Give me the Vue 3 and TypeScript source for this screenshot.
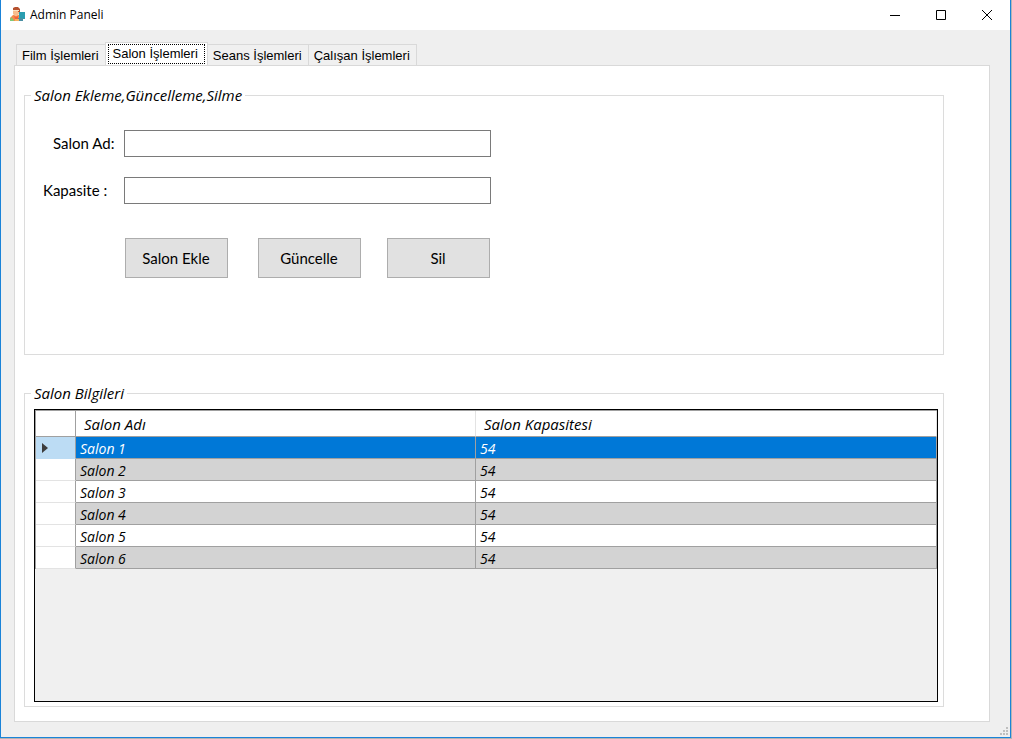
<script setup lang="ts">
import { ref } from 'vue'

interface Hall {
  name: string
  capacity: number
}

const tabs: string[] = ['Film İşlemleri', 'Salon İşlemleri', 'Seans İşlemleri', 'Çalışan İşlemleri']
const activeTab = ref(1)

const halls = ref<Hall[]>([1, 2, 3, 4, 5, 6].map((n) => ({ name: `Salon ${n}`, capacity: 54 })))
const selected = ref(0)
const hallName = ref('')
const capacity = ref('')
</script>

<template>
  <div class="window">
    <header class="titlebar">
      <svg class="app-icon" viewBox="0 0 16 16" aria-hidden="true">
        <path d="M1 14v-3l3-3h6v6z" fill="#f58a4b" />
        <path d="M1 13l1-3 2 2 1 2H1z" fill="#7fc97a" />
        <path d="M4 3h6v4L8 9H6L4 7z" fill="#f8bd8d" />
        <path d="M4 3V1l2-1h3l2 2v3H9V3z" fill="#b5512f" />
        <path d="M4 3h6v1H4z" fill="#fbe3c2" />
        <path d="M5 9l2 1 2-1v3H6z" fill="#f2603c" />
        <path d="M10 5h6v7h-6z" fill="#2a9db0" />
        <path d="M9 11h5v3H9z" fill="#4a8fa3" />
        <path d="M6 12h4v2H6z" fill="#f6b25f" />
      </svg>
      <h1>Admin Paneli</h1>
      <div class="controls">
        <button type="button" aria-label="Simge durumuna küçült">
          <svg viewBox="0 0 12 12"><path d="M1 6.5h10" /></svg>
        </button>
        <button type="button" aria-label="Ekranı kapla">
          <svg viewBox="0 0 12 12"><path d="M1.500 1.500h9v9h-9z" /></svg>
        </button>
        <button type="button" aria-label="Kapat">
          <svg viewBox="0 0 12 12"><path d="M1 1l10 10M11 1L1 11" /></svg>
        </button>
      </div>
    </header>

    <main class="body">
      <div class="tabs" role="tablist">
        <button
          v-for="(tab, i) in tabs"
          :key="tab"
          type="button"
          role="tab"
          class="tab"
          :class="{ active: i === activeTab }"
          :aria-selected="i === activeTab"
          @click="activeTab = i"
        >
          <span>{{ tab }}</span>
        </button>
      </div>

      <section class="page" role="tabpanel">
        <fieldset class="group edit">
          <legend>Salon Ekleme,Güncelleme,Silme</legend>
          <form class="form" @submit.prevent>
            <label class="name" for="hall-name">Salon Ad:</label>
            <input id="hall-name" v-model="hallName" type="text" />
            <label for="hall-capacity">Kapasite :</label>
            <input id="hall-capacity" v-model="capacity" type="text" />
            <div class="actions">
              <button type="button">Salon Ekle</button>
              <button type="button">Güncelle</button>
              <button type="button">Sil</button>
            </div>
          </form>
        </fieldset>

        <fieldset class="group list">
          <legend>Salon Bilgileri</legend>
          <div class="grid">
            <table>
              <colgroup>
                <col class="col-mark" />
                <col class="col-name" />
                <col />
              </colgroup>
              <thead>
                <tr>
                  <td></td>
                  <th scope="col">Salon Adı</th>
                  <th scope="col">Salon Kapasitesi</th>
                </tr>
              </thead>
              <tbody>
                <tr
                  v-for="(hall, i) in halls"
                  :key="hall.name"
                  :class="{ selected: i === selected }"
                  @click="selected = i"
                >
                  <td class="mark">
                    <svg v-if="i === selected" viewBox="0 0 6 10"><path d="M0 0l6 5-6 5z" /></svg>
                  </td>
                  <td>{{ hall.name }}</td>
                  <td>{{ hall.capacity }}</td>
                </tr>
              </tbody>
            </table>
          </div>
        </fieldset>
      </section>

      <svg class="grip" viewBox="0 0 8 8" aria-hidden="true">
        <path d="M6 0h2v2H6zM3 3h2v2H3zM6 3h2v2H6zM0 6h2v2H0zM3 6h2v2H3zM6 6h2v2H6z" />
      </svg>
    </main>
  </div>
</template>

<style>
body {
  background: #b4b4b4;
}
</style>

<style scoped>
* {
  box-sizing: border-box;
}
.window {
  display: flex;
  flex-direction: column;
  min-height: calc(100vh - 1px);
  margin: 0 1px 1px 0;
  border: 1px solid #1a83d8;
  border-top: 0;
  background: #efefef;
  color: #000;
  font: 15px/20px Lato, "Open Sans", sans-serif;
}
button,
input {
  font: inherit;
  color: inherit;
  border-radius: 0;
}
.titlebar {
  display: flex;
  align-items: center;
  height: 30px;
  padding-left: 8px;
  background: #fff;
}
.app-icon {
  width: 16px;
  height: 16px;
  margin-right: 5px;
}
h1 {
  margin: 0;
  font: 12px/16px "Open Sans", "Noto Sans", sans-serif;
}
.controls {
  display: flex;
  margin-left: auto;
}
.controls button {
  display: grid;
  place-items: center;
  width: 46px;
  height: 28px;
  padding: 0;
  border: 0;
  background: none;
}
.controls svg {
  width: 12px;
  height: 12px;
  fill: none;
  stroke: #000;
}
.body {
  position: relative;
  flex: 1;
  display: flex;
  flex-direction: column;
  padding: 12px 20px 15px 13px;
}
.tabs {
  display: flex;
  align-items: flex-end;
  height: 24px;
  margin-bottom: -1px;
  padding-left: 2px;
}
.tab {
  height: 22px;
  padding: 1px 6px 0 5px;
  border: 1px solid #d9d9d9;
  border-right-width: 0;
  background: #f0f0f0;
  font: 13px/20px "Liberation Sans", Arial, sans-serif;
  white-space: nowrap;
}
.tab:last-child {
  border-right-width: 1px;
}
.tab.active {
  height: 24px;
  padding: 0 2px 1px;
  border-right-width: 1px;
  border-bottom: 0;
  background: #fff;
}
.tab.active + .tab {
  border-left-width: 0;
}
.tab.active span {
  display: block;
  padding: 0 6px 0 4px;
  border: 1px dotted #000;
  line-height: 18px;
}
.page {
  flex: 1;
  display: flex;
  flex-direction: column;
  gap: 28px;
  padding: 19px 45px 14px 9px;
  border: 1px solid #d9d9d9;
  background: #fff;
}
.group {
  min-width: 0;
  margin: 0;
  padding: 0;
  border: 1px solid #dcdcdc;
}
.group legend {
  margin-left: 6px;
  padding: 0 3px;
  font: italic 15px/20px "Open Sans", "Noto Sans", sans-serif;
}
.edit {
  min-height: 270px;
}
.form {
  display: grid;
  grid-template-columns: 81px minmax(0, 367px);
  column-gap: 18px;
  row-gap: 20px;
  align-items: center;
  padding-top: 25px;
}
.form label {
  padding: 0 0 2px 18px;
  white-space: nowrap;
}
.form label.name {
  padding-left: 28px;
  margin-right: -10px;
}
.form input {
  width: 100%;
  height: 27px;
  padding: 2px 4px;
  border: 1px solid #7a7a7a;
  background: #fff;
}
.actions {
  grid-column: 2;
  display: grid;
  grid-template-columns: 133px 129px 103px;
  padding: 14px 1px 0;
}
.actions button {
  width: 103px;
  height: 40px;
  padding: 0 1px 1px 0;
  border: 1px solid #adadad;
  background: #e1e1e1;
}
.list {
  flex: 1;
}
.grid {
  min-height: 293px;
  margin: 6px 5px 4px 9px;
  border: 1px solid #000;
  background: #f0f0f0;
}
table {
  width: 100%;
  table-layout: fixed;
  border-collapse: separate;
  border-spacing: 0;
  border-top: 1px solid #a0a0a0;
  border-left: 1px solid #a0a0a0;
  background: #fff;
  font: italic 14px/20px "Open Sans", "Noto Sans", sans-serif;
}
.col-mark {
  width: 40px;
}
.col-name {
  width: 400px;
}
th,
td {
  padding: 0 4px;
  border-right: 1px solid #a0a0a0;
  border-bottom: 1px solid #a0a0a0;
  text-align: left;
  font-weight: 400;
}
thead th,
thead td {
  height: 26px;
  padding: 0 8px;
}
thead th {
  border-right-color: #e3e3e3;
  font-size: 15px;
}
tbody td {
  height: 22px;
  padding-top: 2px;
  line-height: 19px;
}
tbody tr:nth-child(even) td {
  background: #d3d3d3;
}
tbody tr.selected td {
  background: #0078d7;
  color: #fff;
}
tbody tr td.mark,
tbody tr:nth-child(even) td.mark {
  padding: 1px 6px 0;
  border-bottom-color: #e3e3e3;
  background: #fff;
}
tbody tr.selected td.mark,
tbody tr.selected:nth-child(even) td.mark {
  border-bottom-color: #bcdcf4;
  background: #bcdcf4;
}
.mark svg {
  display: block;
  width: 6px;
  height: 10px;
  fill: #3c3c3c;
}
.grip {
  position: absolute;
  right: 2px;
  bottom: 2px;
  width: 8px;
  height: 8px;
  fill: #bfbfbf;
}
</style>
